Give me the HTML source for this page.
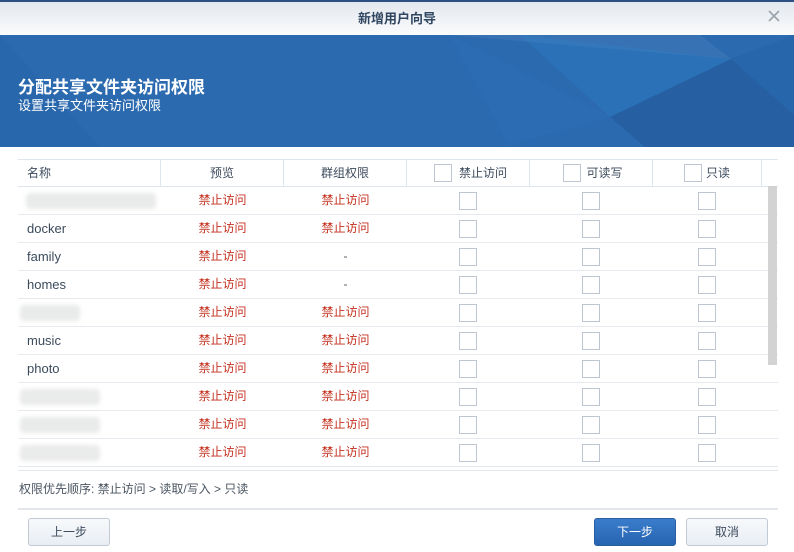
<!DOCTYPE html>
<html><head><meta charset="utf-8"><style>
*{margin:0;padding:0;box-sizing:border-box}
body{width:794px;height:552px;overflow:hidden;background:#fff;font-family:"Liberation Sans","Noto Sans CJK SC",sans-serif;position:relative;color:#4a5561}
.abs{position:absolute}
.top{left:0;top:0;width:794px;height:2px;background:#2c5080}
.title{left:0;top:2px;width:794px;height:33px;background:linear-gradient(#e3e8ee,#fafbfc);text-align:center;line-height:33px;font-size:13px;font-weight:bold;color:#2f4560}
.close{right:14px;top:10px}
.banner{left:0;top:35px;width:794px;height:112px;background:#2b6aaf}
.h1{left:18px;top:73px;font-size:17px;font-weight:bold;color:#fff}
.h2{left:18px;top:95px;font-size:13px;color:#fff}
.hdr{top:159px;height:28px;border-top:1px solid #dfe5ec;border-bottom:1px solid #dfe5ec;font-size:12px;line-height:26px;color:#3c4b5c}
.cell{top:0;height:26px;border-right:1px solid #dfe5ec;text-align:center}
.row{left:18px;width:760px;height:28px;border-bottom:1px solid #e6eaef;font-size:12px;line-height:27px}
.cb{width:18px;height:18px;border:1px solid #bcc5d0;background:#fff;position:absolute}
.red{color:#c4311f;position:absolute;text-align:center;width:123px}
.blur{position:absolute;background:#e9eaea;filter:blur(2px);border-radius:4px}
.btn{top:518px;height:28px;border:1px solid #c2cad4;border-radius:3px;background:linear-gradient(#f7f9fb,#e9eef4);text-align:center;line-height:26px;font-size:12px;color:#3c4b5c}
</style></head><body>
<div class="abs top"></div>
<div class="abs title">新增用户向导</div>
<svg class="abs close" width="12" height="12"><path d="M1 1L11 11M11 1L1 11" stroke="#9aa2ab" stroke-width="1.6"/></svg>
<div class="abs banner">
<svg width="794" height="112" style="position:absolute;left:0;top:0">
<polygon points="450,0 700,0 731,24" fill="#5a8fc4" opacity=".25"/>
<polygon points="731,24 610,82 645,112 794,112 794,80" fill="#17407c" opacity=".22"/>
<polygon points="520,0 731,24 610,82" fill="#2a86d0" opacity=".25"/>
<polygon points="731,24 794,0 794,80" fill="#1e5ca0" opacity=".3"/>
<polygon points="450,0 610,82 500,112 510,112" fill="#3278bf" opacity=".2"/>
<polygon points="0,0 100,112 0,112" fill="#245fa2" opacity=".2"/>
</svg>
</div>
<div class="abs h1">分配共享文件夹访问权限</div>
<div class="abs h2">设置共享文件夹访问权限</div>

<div class="abs hdr" style="left:18px;width:760px">
<div class="abs cell" style="left:0;width:143px;text-align:left;padding-left:9px">名称</div>
<div class="abs cell" style="left:143px;width:123px">预览</div>
<div class="abs cell" style="left:266px;width:123px">群组权限</div>
<div class="abs cell" style="left:389px;width:123px"><span class="cb" style="left:27px;top:4px"></span><span style="margin-left:30px">禁止访问</span></div>
<div class="abs cell" style="left:512px;width:123px"><span class="cb" style="left:33px;top:4px"></span><span style="margin-left:27px">可读写</span></div>
<div class="abs cell" style="left:635px;width:109px"><span class="cb" style="left:31px;top:4px"></span><span style="margin-left:22px">只读</span></div>
</div>

<div id="rows"></div>
<script>
var names=["","docker","family","homes","","music","photo","","",""];
var grp=[1,1,0,0,1,1,1,1,1,1];
var h="";
for(var i=0;i<10;i++){var y=187+i*28;
h+='<div class="abs row" style="top:'+y+'px">';
if(names[i])h+='<span style="position:absolute;left:9px;color:#3c4b5c;font-size:13px">'+names[i]+'</span>';
else h+='<span class="blur" style="left:'+(i==0?8:2)+'px;top:6px;width:'+(i==0?130:(i==4?60:80))+'px;height:16px"></span>';
h+='<span class="red" style="left:143px">禁止访问</span>';
h+=grp[i]?'<span class="red" style="left:266px">禁止访问</span>':'<span class="red" style="left:266px;color:#555">-</span>';
h+='<span class="cb" style="left:441px;top:5px"></span><span class="cb" style="left:564px;top:5px"></span><span class="cb" style="left:680px;top:5px"></span>';
h+='</div>';}
document.getElementById('rows').innerHTML=h;
</script>
<div class="abs" style="left:768px;top:186px;width:9px;height:179px;background:#d3d3d4"></div>
<div class="abs" style="left:18px;top:470px;width:760px;height:1px;background:#e3e8ee"></div>
<div class="abs" style="left:19px;top:480px;font-size:12px;color:#4a5561">权限优先顺序: 禁止访问 &gt; 读取/写入 &gt; 只读</div>
<div class="abs" style="left:18px;top:508px;width:760px;height:2px;background:#e3e6ea"></div>
<div class="abs btn" style="left:28px;width:82px">上一步</div>
<div class="abs btn" style="left:594px;width:82px;background:linear-gradient(#3a7dcc,#2764b0);border-color:#2a5f9e;color:#fff">下一步</div>
<div class="abs btn" style="left:686px;width:82px">取消</div>
</body></html>
